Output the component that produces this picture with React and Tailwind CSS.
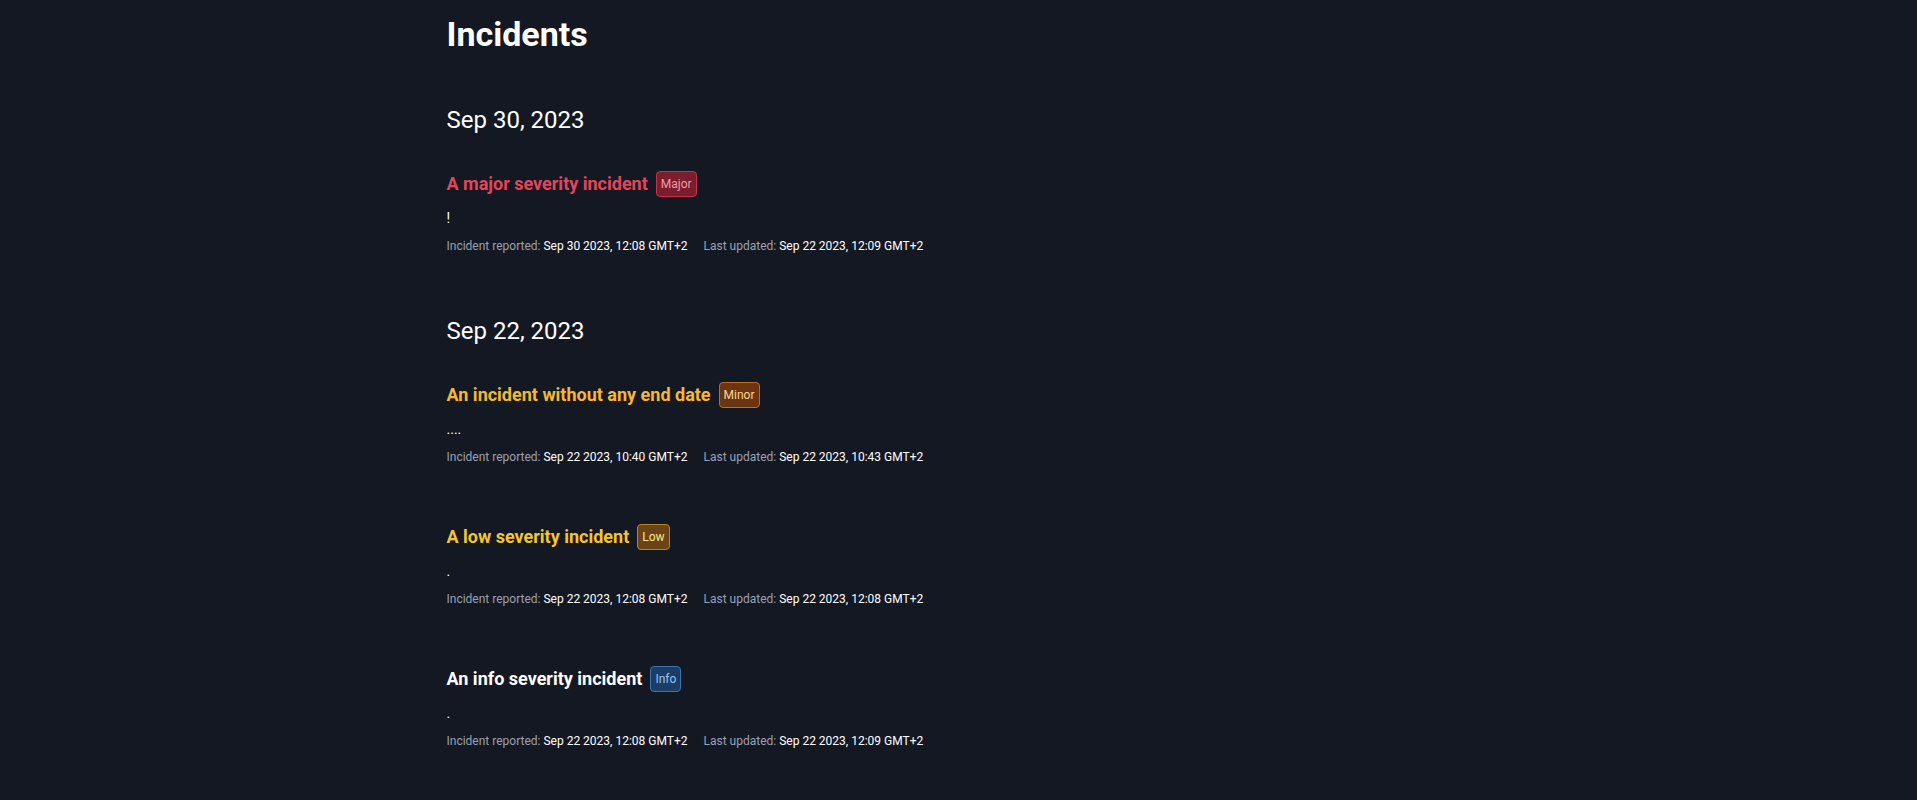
const days = [
  {
    date: "Sep 30, 2023",
    incidents: [
      {
        title: "A major severity incident",
        severity: "Major",
        description: "!",
        reported: "Sep 30 2023, 12:08 GMT+2",
        updated: "Sep 22 2023, 12:09 GMT+2",
      },
    ],
  },
  {
    date: "Sep 22, 2023",
    incidents: [
      {
        title: "An incident without any end date",
        severity: "Minor",
        description: "....",
        reported: "Sep 22 2023, 10:40 GMT+2",
        updated: "Sep 22 2023, 10:43 GMT+2",
      },
      {
        title: "A low severity incident",
        severity: "Low",
        description: ".",
        reported: "Sep 22 2023, 12:08 GMT+2",
        updated: "Sep 22 2023, 12:08 GMT+2",
      },
      {
        title: "An info severity incident",
        severity: "Info",
        description: ".",
        reported: "Sep 22 2023, 12:08 GMT+2",
        updated: "Sep 22 2023, 12:09 GMT+2",
      },
    ],
  },
];

const titleColors = {
  Major: "text-[#e3455a]",
  Minor: "text-[#f4b832]",
  Low: "text-[#f5c62c]",
  Info: "text-white",
};

const badgeStyles = {
  Major: "bg-[#7a1d2d] border-[#c03349] text-[#f39aa7]",
  Minor: "bg-[#6a3512] border-[#c06b22] text-[#fcd58a]",
  Low: "bg-[#6a4416] border-[#b8841f] text-[#fde68a]",
  Info: "bg-[#1c3e65] border-[#3a72b4] text-[#93c5fd]",
};

function Incident({ incident, first }) {
  return (
    <div className={first ? "mt-[34px]" : "mt-[58px]"}>
      <div className="flex items-center">
        <h3 className={`text-lg leading-7 font-bold ${titleColors[incident.severity]}`}>
          {incident.title}
        </h3>
        {/* severity badge */}
        <span
          className={`ml-2 rounded border px-1 py-1 text-xs leading-4 ${badgeStyles[incident.severity]}`}
        >
          {incident.severity}
        </span>
      </div>
      <p className="mt-2.5 text-sm leading-5 text-white">{incident.description}</p>
      <div className="mt-2.5 flex gap-4 text-xs leading-4">
        <span className="text-[#9aa1b1]">
          Incident reported: <span className="text-white">{incident.reported}</span>
        </span>
        <span className="text-[#9aa1b1]">
          Last updated: <span className="text-white">{incident.updated}</span>
        </span>
      </div>
    </div>
  );
}

export default function App() {
  return (
    <div
      className="min-h-screen bg-[#141823] pb-16"
      style={{ fontFamily: "Roboto, 'Noto Sans', sans-serif" }}
    >
      <div className="mx-auto max-w-5xl pt-[14px]">
        <h1 className="text-[34px] leading-10 font-bold text-white">Incidents</h1>

        {days.map((day, i) => (
          <div key={day.date} className={i === 0 ? "mt-[50px]" : "mt-[61px]"}>
            <h2 className="text-2xl leading-8 text-white">{day.date}</h2>
            {day.incidents.map((incident, j) => (
              <Incident key={incident.title} incident={incident} first={j === 0} />
            ))}
          </div>
        ))}
      </div>
    </div>
  );
}
